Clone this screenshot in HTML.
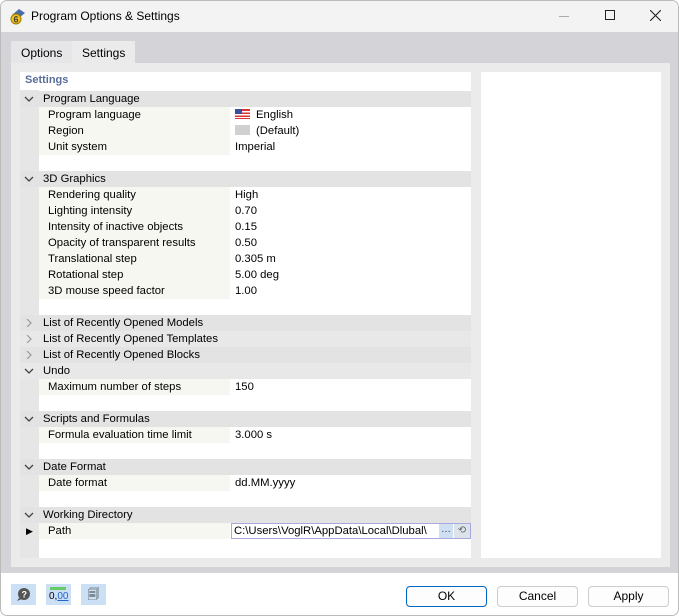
<!DOCTYPE html>
<html><head><meta charset="utf-8"><style>
*{margin:0;padding:0;box-sizing:border-box}
body{width:679px;height:616px;overflow:hidden;background:#fff;font-family:"Liberation Sans",sans-serif;font-size:11.3px;color:#000;position:relative}
.a{position:absolute}
.row{position:absolute;left:19px;width:451px;height:16px;line-height:16px;white-space:nowrap}
.hd{background:#e3e3e3}
.hd2{background:#e8e8e8}
.hd span.t,.hd2 span.t{position:absolute;left:23px}
.hd svg.chv,.hd2 svg.chv{position:absolute;left:4px;top:4px}
.pr .g{position:absolute;left:0;width:19px;height:16px;background:#e6e6e6}
.pr .n{position:absolute;left:19px;width:191px;height:16px;background:#f7f7f2;padding-left:9px}
.pr .v{position:absolute;left:215px}
.btn{position:absolute;top:585px;height:21px;width:81px;border:1px solid #ccc;border-radius:4px;background:#fdfdfd;text-align:center;line-height:19px;font-size:12px}
</style></head><body>
<div class="a" style="left:0;top:0;width:679px;height:616px;border:1px solid #bbb;border-radius:7px;overflow:hidden">
<div class="a" style="left:0;top:0;width:679px;height:31px;background:#f3f3f3"></div>
<svg class="a" style="left:8px;top:6px" width="18" height="18" viewBox="0 0 18 18"><path d="M3 8 L10 2 L16 6 L11 10Z" fill="#4a6fa8"/><circle cx="7" cy="12" r="5" fill="#f0c419" stroke="#a07800"/><text x="4.5" y="15.5" font-size="9" font-weight="bold" fill="#444" font-family="Liberation Sans">6</text></svg>
<div class="a" style="left:30px;top:8px;font-size:12px">Program Options &amp; Settings</div>
<div class="a" style="left:558px;top:15px;width:10px;height:1px;background:#aaa"></div>
<div class="a" style="left:604px;top:9px;width:10px;height:10px;border:1px solid #222"></div>
<svg class="a" style="left:649px;top:9px" width="11" height="11"><path d="M0 0L11 11M11 0L0 11" stroke="#222" stroke-width="1.1"/></svg>
<div class="a" style="left:0;top:31px;width:679px;height:541px;background:#d3d3d8"></div>
<div class="a" style="left:10px;top:40px;width:61px;height:22px;background:#e6e6e8;line-height:24px;padding-left:10px;font-size:12px">Options</div>
<div class="a" style="left:71px;top:40px;width:63px;height:22px;background:#ebebeb;line-height:24px;padding-left:10px;font-size:12px">Settings</div>
<div class="a" style="left:10px;top:62px;width:659px;height:504px;background:#ebebeb"></div>
<div class="a" style="left:19px;top:71px;width:451px;height:486px;background:#fff"></div>
<div class="a" style="left:480px;top:71px;width:180px;height:486px;background:#fff"></div>
<div class="a" style="left:19px;top:89px;width:19px;height:468px;background:#e6e6e6"></div>
<div class="a" style="left:24px;top:73px;color:#5a6e9a;font-weight:bold;font-size:11px">Settings</div>

<div class="row hd" style="top:90px"><svg class="chv" width="10" height="8"><path d="M1 2L5 6L9 2" stroke="#444" stroke-width="1.3" fill="none"/></svg><span class="t">Program Language</span></div>
<div class="row pr" style="top:106px"><div class="g"></div><div class="n">Program language</div><div class="v"><svg width="15" height="10" style="vertical-align:-1px;margin-right:6px"><rect width="15" height="10" fill="#d33"/><rect y="2" width="15" height="1.5" fill="#fff"/><rect y="5" width="15" height="1.5" fill="#fff"/><rect y="8" width="15" height="1" fill="#fff"/><rect width="7" height="5" fill="#3c4f9a"/></svg>English</div></div>
<div class="row pr" style="top:122px"><div class="g"></div><div class="n">Region</div><div class="v"><span style="display:inline-block;width:15px;height:10px;background:#d0d0d0;vertical-align:-1px;margin-right:6px"></span>(Default)</div></div>
<div class="row pr" style="top:138px"><div class="g"></div><div class="n">Unit system</div><div class="v">Imperial</div></div>
<div class="row hd" style="top:170px"><svg class="chv" width="10" height="8"><path d="M1 2L5 6L9 2" stroke="#444" stroke-width="1.3" fill="none"/></svg><span class="t">3D Graphics</span></div>
<div class="row pr" style="top:186px"><div class="g"></div><div class="n">Rendering quality</div><div class="v">High</div></div>
<div class="row pr" style="top:202px"><div class="g"></div><div class="n">Lighting intensity</div><div class="v">0.70</div></div>
<div class="row pr" style="top:218px"><div class="g"></div><div class="n">Intensity of inactive objects</div><div class="v">0.15</div></div>
<div class="row pr" style="top:234px"><div class="g"></div><div class="n">Opacity of transparent results</div><div class="v">0.50</div></div>
<div class="row pr" style="top:250px"><div class="g"></div><div class="n">Translational step</div><div class="v">0.305 m</div></div>
<div class="row pr" style="top:266px"><div class="g"></div><div class="n">Rotational step</div><div class="v">5.00 deg</div></div>
<div class="row pr" style="top:282px"><div class="g"></div><div class="n">3D mouse speed factor</div><div class="v">1.00</div></div>
<div class="row hd" style="top:314px"><svg class="chv" width="10" height="8"><path d="M3 0L7 4L3 8" stroke="#999" stroke-width="1.2" fill="none"/></svg><span class="t">List of Recently Opened Models</span></div>
<div class="row hd2" style="top:330px"><svg class="chv" width="10" height="8"><path d="M3 0L7 4L3 8" stroke="#999" stroke-width="1.2" fill="none"/></svg><span class="t">List of Recently Opened Templates</span></div>
<div class="row hd" style="top:346px"><svg class="chv" width="10" height="8"><path d="M3 0L7 4L3 8" stroke="#999" stroke-width="1.2" fill="none"/></svg><span class="t">List of Recently Opened Blocks</span></div>
<div class="row hd2" style="top:362px"><svg class="chv" width="10" height="8"><path d="M1 2L5 6L9 2" stroke="#444" stroke-width="1.3" fill="none"/></svg><span class="t">Undo</span></div>
<div class="row pr" style="top:378px"><div class="g"></div><div class="n">Maximum number of steps</div><div class="v">150</div></div>
<div class="row hd" style="top:410px"><svg class="chv" width="10" height="8"><path d="M1 2L5 6L9 2" stroke="#444" stroke-width="1.3" fill="none"/></svg><span class="t">Scripts and Formulas</span></div>
<div class="row pr" style="top:426px"><div class="g"></div><div class="n">Formula evaluation time limit</div><div class="v">3.000 s</div></div>
<div class="row hd" style="top:458px"><svg class="chv" width="10" height="8"><path d="M1 2L5 6L9 2" stroke="#444" stroke-width="1.3" fill="none"/></svg><span class="t">Date Format</span></div>
<div class="row pr" style="top:474px"><div class="g"></div><div class="n">Date format</div><div class="v">dd.MM.yyyy</div></div>
<div class="row hd" style="top:506px"><svg class="chv" width="10" height="8"><path d="M1 2L5 6L9 2" stroke="#444" stroke-width="1.3" fill="none"/></svg><span class="t">Working Directory</span></div>
<div class="row pr" style="top:522px"><div class="g"></div><span class="a" style="left:6px;top:0;font-size:9px">▶</span><div class="n">Path</div></div>
<div class="a" style="left:230px;top:522px;width:240px;height:16px;border:1px solid #a9a9e0;background:#fff;line-height:14px;padding-left:2px;white-space:nowrap;overflow:hidden">C:\Users\VoglR\AppData\Local\Dlubal\</div>
<div class="a" style="left:438px;top:523px;width:14px;height:14px;background:#cfe0f2;color:#336;font-size:10px;line-height:12px;text-align:center">…</div>
<div class="a" style="left:453px;top:523px;width:16px;height:14px;background:#dde3ea;color:#666;font-size:10px;line-height:14px;text-align:center">⟲</div>

<div class="a" style="left:10px;top:583px;width:25px;height:21px;background:#cce0f5"><svg width="25" height="21"><circle cx="13" cy="10" r="6" fill="#555"/><path d="M8 14 L6 17 L11 15Z" fill="#555"/><text x="10.5" y="13.5" font-size="9" font-weight="bold" fill="#fff" font-family="Liberation Sans">?</text></svg></div>
<div class="a" style="left:45px;top:583px;width:25px;height:21px;background:#cce0f5"><div class="a" style="left:4px;top:3px;width:16px;height:3px;background:#6c6"></div><div class="a" style="left:3px;top:7px;font-size:10px;line-height:12px">0,<span style="color:#26c;text-decoration:underline">00</span></div></div>
<div class="a" style="left:80px;top:583px;width:25px;height:21px;background:#cce0f5;color:#333;font-size:12px;line-height:21px;text-align:center">🗐</div>
<div class="btn" style="left:405px;border:1px solid #0067c0">OK</div>
<div class="btn" style="left:496px">Cancel</div>
<div class="btn" style="left:587px">Apply</div>
</div>
</body></html>
